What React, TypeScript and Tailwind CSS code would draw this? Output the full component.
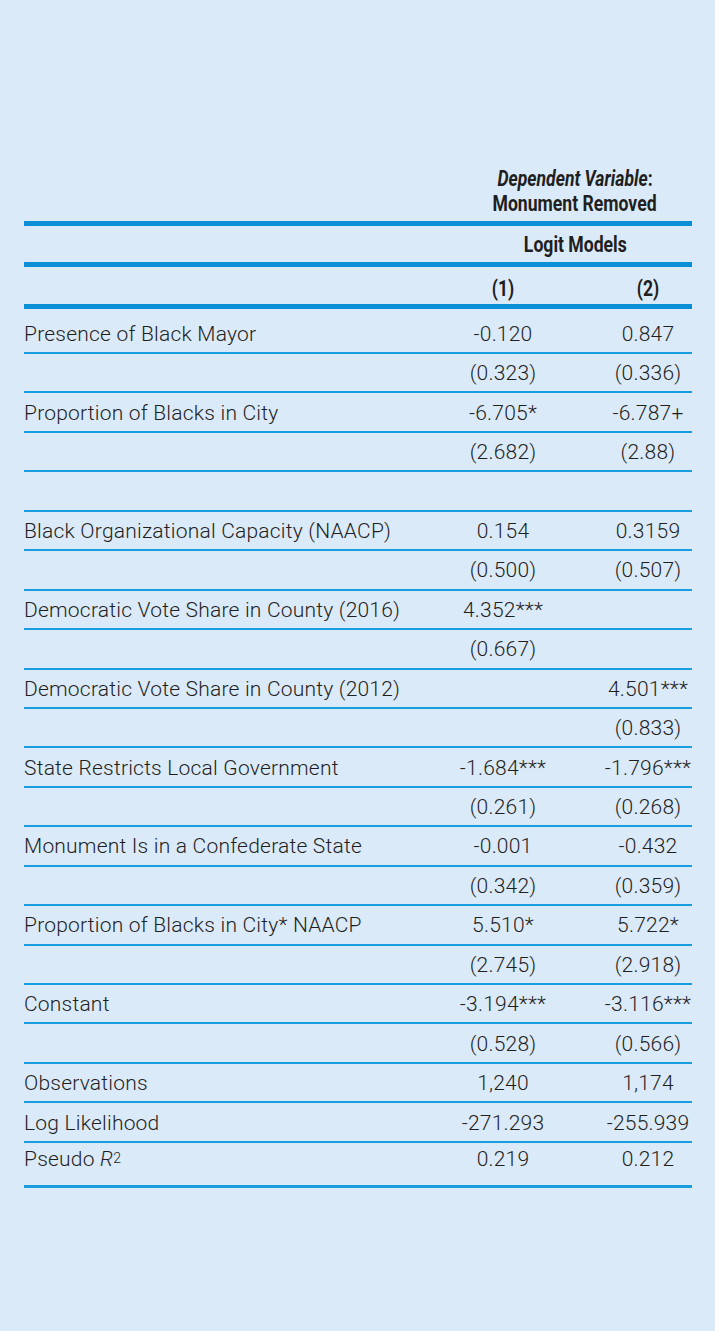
import React from "react";

type Row = { label?: React.ReactNode; a?: string; b?: string };

const rows: Row[] = [
  { label: "Presence of Black Mayor", a: "-0.120", b: "0.847" },
  { a: "(0.323)", b: "(0.336)" },
  { label: "Proportion of Blacks in City", a: "-6.705*", b: "-6.787+" },
  { a: "(2.682)", b: "(2.88)" },
  {},
  { label: "Black Organizational Capacity (NAACP)", a: "0.154", b: "0.3159" },
  { a: "(0.500)", b: "(0.507)" },
  { label: "Democratic Vote Share in County (2016)", a: "4.352***", b: "" },
  { a: "(0.667)", b: "" },
  { label: "Democratic Vote Share in County (2012)", a: "", b: "4.501***" },
  { a: "", b: "(0.833)" },
  { label: "State Restricts Local Government", a: "-1.684***", b: "-1.796***" },
  { a: "(0.261)", b: "(0.268)" },
  { label: "Monument Is in a Confederate State", a: "-0.001", b: "-0.432" },
  { a: "(0.342)", b: "(0.359)" },
  { label: "Proportion of Blacks in City* NAACP", a: "5.510*", b: "5.722*" },
  { a: "(2.745)", b: "(2.918)" },
  { label: "Constant", a: "-3.194***", b: "-3.116***" },
  { a: "(0.528)", b: "(0.566)" },
  { label: "Observations", a: "1,240", b: "1,174" },
  { label: "Log Likelihood", a: "-271.293", b: "-255.939" },
];

function Cells({ r }: { r: Row }) {
  return (
    <>
      <div className="whitespace-nowrap">{r.label}</div>
      <div className="text-center whitespace-nowrap">{r.a}</div>
      <div className="text-center whitespace-nowrap pl-[31px]">{r.b}</div>
    </>
  );
}

export default function App() {
  return (
    <div
      className="min-h-[1331px] w-[715px] bg-[#dbeaf8] text-[#1f1f1f]"
      style={{ fontFamily: "Roboto, 'Liberation Sans', sans-serif" }}
    >
      <div className="ml-[24px] w-[668px] pt-[166px]">
        {/* Header: dependent variable */}
        <div className="grid grid-cols-[409px_140px_119px] mb-[5px]">
          <div className="col-start-2 col-span-2 pl-[25px] flex flex-col items-center text-[22px] leading-[25px] font-bold">
            <span className="inline-block scale-x-[0.8] whitespace-nowrap">
              <i>Dependent Variable</i>:
            </span>
            <span className="inline-block scale-x-[0.8] whitespace-nowrap">
              Monument Removed
            </span>
          </div>
        </div>
        <div className="h-[5px] bg-[#0b8fd6]" />
        <div className="grid grid-cols-[409px_140px_119px] h-[36px] items-center">
          <div className="col-start-2 col-span-2 pl-[25px] flex justify-center text-[22px] font-bold">
            <span className="inline-block scale-x-[0.8] whitespace-nowrap">Logit Models</span>
          </div>
        </div>
        <div className="h-[5px] bg-[#0b8fd6]" />
        <div className="grid grid-cols-[409px_140px_119px] h-[37px] items-center pt-[5px] text-[22px] font-bold">
          <div />
          <div className="flex justify-center">
            <span className="inline-block scale-x-[0.8]">(1)</span>
          </div>
          <div className="flex justify-center pl-[31px]">
            <span className="inline-block scale-x-[0.8]">(2)</span>
          </div>
        </div>
        <div className="h-[5px] bg-[#0b8fd6]" />

        {/* Body */}
        <div className="text-[21px] tracking-[0.01em] font-light leading-none">
          {rows.map((r, i) => (
            <div
              key={i}
              className={
                i === 0
                  ? "grid grid-cols-[409px_140px_119px] items-center h-[45px] pt-[7px] border-b-2 border-[#189de0]"
                  : "grid grid-cols-[409px_140px_119px] items-center h-[39.45px] pt-[2px] border-b-2 border-[#189de0]"
              }
            >
              <Cells r={r} />
            </div>
          ))}
          <div className="grid grid-cols-[409px_140px_119px] items-center h-[45px] pb-[8px] border-b-[3px] border-[#1a9ddc]">
            <div className="whitespace-nowrap">
              Pseudo <i>R</i>
              <sup className="text-[14px] relative -top-[3px]">2</sup>
            </div>
            <div className="text-center">0.219</div>
            <div className="text-center pl-[31px]">0.212</div>
          </div>
        </div>
      </div>
    </div>
  );
}
